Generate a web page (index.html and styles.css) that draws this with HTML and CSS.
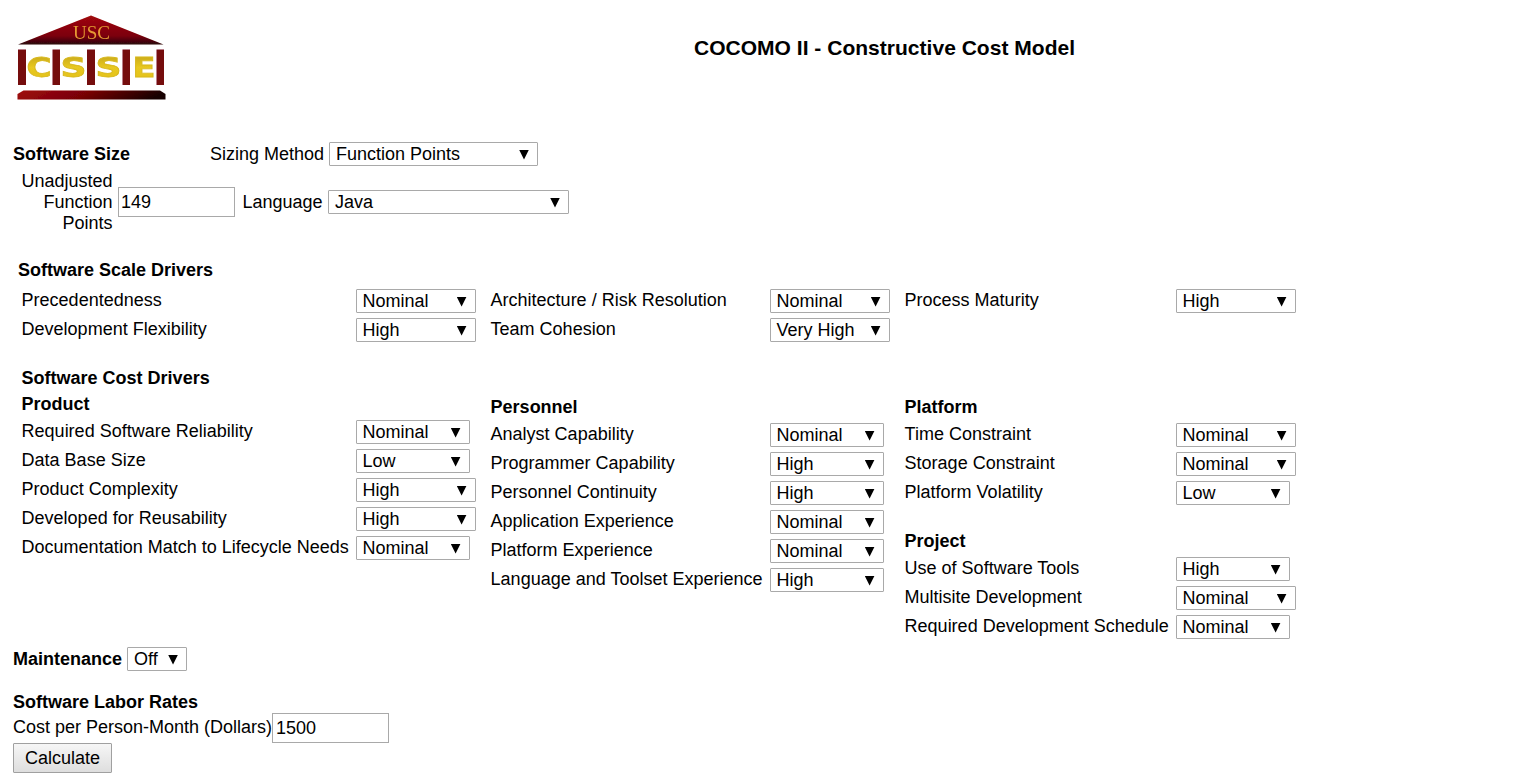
FILE: index.html
```html
<!DOCTYPE html>
<html lang="en">
<head>
<meta charset="utf-8">
<title>COCOMO II - Constructive Cost Model</title>
<link rel="stylesheet" href="styles.css">
</head>
<body>
<header class="header">
  <svg class="logo" width="160" height="100" viewBox="10 10 160 100">
    <defs>
      <linearGradient id="roof" x1="0" y1="0" x2="0" y2="1"><stop offset="0" stop-color="#a00808"/><stop offset=".7" stop-color="#7c0007"/><stop offset="1" stop-color="#280808"/></linearGradient>
      <linearGradient id="base" x1="0" y1="0" x2="1" y2=".12"><stop offset="0" stop-color="#a00c0c"/><stop offset=".5" stop-color="#780006"/><stop offset="1" stop-color="#180004"/></linearGradient>
      <linearGradient id="gold" x1="0" y1="0" x2="0" y2="1"><stop offset="0" stop-color="#bfa018"/><stop offset=".5" stop-color="#e8c820"/><stop offset="1" stop-color="#e2c01c"/></linearGradient>
      <filter id="soft" x="-5%" y="-5%" width="110%" height="110%"><feGaussianBlur stdDeviation=".55"/></filter>
    </defs>
    <g filter="url(#soft)">
      <path d="M91 15.500 163.500 44.500H18Z" fill="url(#roof)"/>
      <text class="logo-usc" x="73" y="39" textLength="37" lengthAdjust="spacingAndGlyphs">USC</text>
      <g fill="#74080f"><path d="M18 49.500h8v35.500h-8zM52.500 49.500h7.500v35.500h-7.500zM87 49.500h8v35.500h-8zM122.500 49.500h7.500v35.500h-7.500zM156.500 49.500h7.500v35.500h-7.500z"/></g>
      <g class="logo-csse">
        <text x="26.500" y="77" textLength="25" lengthAdjust="spacingAndGlyphs">C</text>
        <text x="60.500" y="77" textLength="26" lengthAdjust="spacingAndGlyphs">S</text>
        <text x="95.500" y="77" textLength="26" lengthAdjust="spacingAndGlyphs">S</text>
        <text x="132.500" y="77" textLength="23" lengthAdjust="spacingAndGlyphs">E</text>
      </g>
      <path d="M23.500 90.500H160L165.500 94V99.500H17.500V94Z" fill="url(#base)"/>
    </g>
  </svg>
  <h1 class="title">COCOMO II - Constructive Cost Model</h1>
</header>

<main>
  <section class="size">
    <div class="line">
      <b class="size-heading">Software Size</b>
      <span class="method-label">Sizing Method</span>
      <span class="select method">Function Points<i class="arrow"></i></span>
    </div>
    <div class="line points">
      <span class="points-label">Unadjusted Function Points</span>
      <input class="field" value="149">
      <span class="language-label">Language</span>
      <span class="select language">Java<i class="arrow"></i></span>
    </div>
  </section>

  <section class="scale">
    <h2 class="scale-heading">Software Scale Drivers</h2>
    <div class="columns">
      <div class="col first">
        <div class="row"><span class="label">Precedentedness</span><span class="select wide">Nominal<i class="arrow"></i></span></div>
        <div class="row"><span class="label">Development Flexibility</span><span class="select wide">High<i class="arrow"></i></span></div>
      </div>
      <div class="col second">
        <div class="row"><span class="label">Architecture / Risk Resolution</span><span class="select wide">Nominal<i class="arrow"></i></span></div>
        <div class="row"><span class="label">Team Cohesion</span><span class="select wide">Very High<i class="arrow"></i></span></div>
      </div>
      <div class="col third">
        <div class="row"><span class="label">Process Maturity</span><span class="select wide">High<i class="arrow"></i></span></div>
      </div>
    </div>
  </section>

  <section class="cost">
    <div class="columns">
      <div class="col first">
        <h2 class="cost-heading">Software Cost Drivers</h2>
        <h3 class="group product">Product</h3>
        <div class="row"><span class="label">Required Software Reliability</span><span class="select">Nominal<i class="arrow"></i></span></div>
        <div class="row"><span class="label">Data Base Size</span><span class="select">Low<i class="arrow"></i></span></div>
        <div class="row"><span class="label">Product Complexity</span><span class="select wide">High<i class="arrow"></i></span></div>
        <div class="row"><span class="label">Developed for Reusability</span><span class="select wide">High<i class="arrow"></i></span></div>
        <div class="row"><span class="label">Documentation Match to Lifecycle Needs</span><span class="select">Nominal<i class="arrow"></i></span></div>
      </div>
      <div class="col second offset">
        <h3 class="group">Personnel</h3>
        <div class="row"><span class="label">Analyst Capability</span><span class="select">Nominal<i class="arrow"></i></span></div>
        <div class="row"><span class="label">Programmer Capability</span><span class="select">High<i class="arrow"></i></span></div>
        <div class="row"><span class="label">Personnel Continuity</span><span class="select">High<i class="arrow"></i></span></div>
        <div class="row"><span class="label">Application Experience</span><span class="select">Nominal<i class="arrow"></i></span></div>
        <div class="row"><span class="label">Platform Experience</span><span class="select">Nominal<i class="arrow"></i></span></div>
        <div class="row"><span class="label">Language and Toolset Experience</span><span class="select">High<i class="arrow"></i></span></div>
      </div>
      <div class="col third offset">
        <h3 class="group">Platform</h3>
        <div class="row"><span class="label">Time Constraint</span><span class="select wide">Nominal<i class="arrow"></i></span></div>
        <div class="row"><span class="label">Storage Constraint</span><span class="select wide">Nominal<i class="arrow"></i></span></div>
        <div class="row"><span class="label">Platform Volatility</span><span class="select">Low<i class="arrow"></i></span></div>
        <h3 class="group project">Project</h3>
        <div class="row"><span class="label">Use of Software Tools</span><span class="select">High<i class="arrow"></i></span></div>
        <div class="row"><span class="label">Multisite Development</span><span class="select wide">Nominal<i class="arrow"></i></span></div>
        <div class="row"><span class="label">Required Development Schedule</span><span class="select">Nominal<i class="arrow"></i></span></div>
      </div>
    </div>
  </section>

  <section class="rates">
    <div class="line maintenance"><b>Maintenance</b><span class="select off">Off<i class="arrow"></i></span></div>
    <h2 class="rates-heading">Software Labor Rates</h2>
    <div class="line cost-line"><span class="cost-label">Cost per Person-Month (Dollars)</span><input class="field" value="1500"></div>
    <button class="calculate">Calculate</button>
  </section>
</main>
</body>
</html>
```
FILE: styles.css
```css
* { box-sizing: border-box; }
body {
  margin: 0;
  height: 780px;
  overflow: hidden;
  background: #fff;
  color: #000;
  font: 18px/21px "Liberation Sans", Arial, sans-serif;
}
h1, h2, h3 { margin: 0; font-size: 18px; line-height: 21px; }

.header { display: flex; height: 142px; padding: 10px 0 0 10px; }
.logo { flex: none; }
.logo-usc { font: 19px "Liberation Serif", serif; fill: #e59a35; }
.logo-csse { font: bold 27px "DejaVu Sans", sans-serif; fill: url(#gold); stroke: #d8b81c; stroke-width: .8px; }
.title { margin: 26px 0 0 524px; font-size: 21px; line-height: 24px; letter-spacing: .02px; white-space: nowrap; }

.line { display: flex; align-items: center; white-space: nowrap; }
.size { height: 118px; padding-left: 13px; }
.size-heading { width: 197px; }
.method-label { width: 119px; }
.points { height: 63px; margin-top: 5px; align-items: flex-start; }
.points-label { width: 99.5px; white-space: normal; text-align: right; }
.language-label { width: 85.5px; margin: 21px 0 0 7.5px; }

.select {
  display: flex;
  flex: none;
  align-items: center;
  justify-content: space-between;
  width: 114px;
  height: 24px;
  padding: 0 9px 0 6px;
  border: 1px solid #a9a9a9;
  border-radius: 1px;
  line-height: 22px;
}
.wide { width: 120px; }
.method { width: 209px; }
.language { width: 241px; margin-top: 19px; }
.off { width: 60px; margin-left: 5px; }
.arrow { width: 10px; height: 10px; margin: 1px -1px 0 0; background: #000; clip-path: polygon(0 0, 100% 0, 50% 100%); }
.field {
  width: 117px;
  height: 30px;
  margin: 0;
  padding: 0 2px;
  border: 1px solid #a9a9a9;
  border-radius: 0;
  background: #fff;
  color: #000;
  font: inherit;
}
.points .field { margin: 16px 0 0 5.5px; }

.scale { height: 108px; }
.scale-heading { height: 29px; padding-left: 18px; }
.columns { display: flex; padding-left: 21.6px; }
.first { width: 469px; }
.second { width: 414px; }
.third { width: 391px; }
.first .row { grid-template-columns: 334px auto; }
.second .row { grid-template-columns: 279px auto; }
.third .row { grid-template-columns: 271px auto; }
.row { display: grid; justify-content: start; height: 29px; white-space: nowrap; }
.label { padding-top: 1px; }
.cost { height: 279px; }
.cost-heading { height: 26px; }
.group { height: 26px; }
.offset { padding-top: 29px; }
.project { height: 47px; padding-top: 21px; }

.rates { padding-left: 13px; }
.maintenance { height: 24px; }
.rates-heading { margin-top: 21px; }
.cost-line { height: 30px; align-items: flex-start; }
.cost-label { width: 259px; padding-top: 4px; }
.cost-line .field { padding-left: 3px; }
.calculate {
  display: block;
  width: 99px;
  height: 30px;
  padding: 0;
  border: 1px solid #a0a0a0;
  border-radius: 1px;
  background: linear-gradient(#f6f6f6, #dedede);
  color: #000;
  font: inherit;
}
```
